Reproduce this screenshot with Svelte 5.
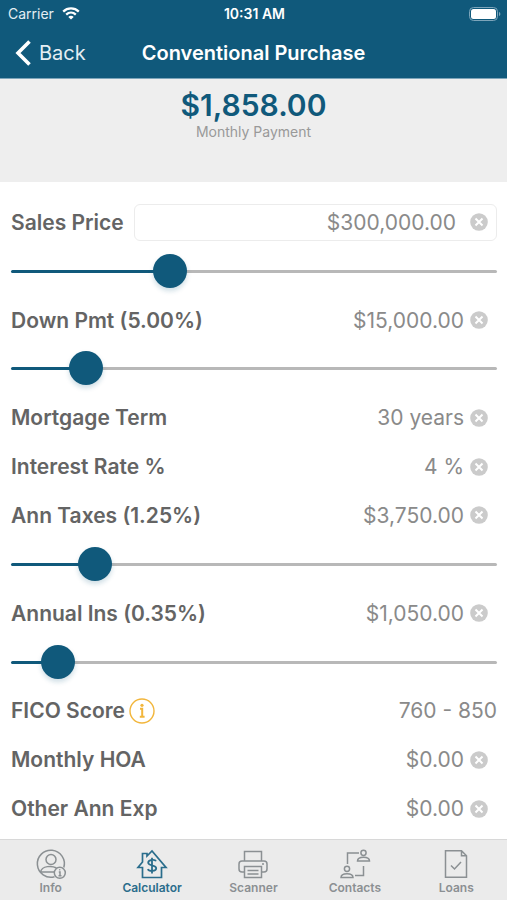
<script lang="ts">
	interface Field {
		id: string;
		label: string;
		value: string;
		slider?: number;
		boxed?: boolean;
	}

	let fields: Field[] = $state([
		{ id: 'price', label: 'Sales Price', value: '$300,000.00', slider: 314, boxed: true },
		{ id: 'down', label: 'Down Pmt (5.00%)', value: '$15,000.00', slider: 128 },
		{ id: 'term', label: 'Mortgage Term', value: '30 years' },
		{ id: 'rate', label: 'Interest Rate %', value: '4 %' },
		{ id: 'taxes', label: 'Ann Taxes (1.25%)', value: '$3,750.00', slider: 149 },
		{ id: 'insurance', label: 'Annual Ins (0.35%)', value: '$1,050.00', slider: 66 },
		{ id: 'fico', label: 'FICO Score', value: '760 - 850' },
		{ id: 'hoa', label: 'Monthly HOA', value: '$0.00' },
		{ id: 'other', label: 'Other Ann Exp', value: '$0.00' }
	]);

	const tabs = ['Info', 'Calculator', 'Scanner', 'Contacts', 'Loans'];
	let active = $state('Calculator');
</script>

<div class="app">
	<header>
		<div class="status">
			<div class="carrier">
				<span>Carrier</span>
				<svg class="wifi" viewBox="0 0 18 13" fill="none" stroke="currentColor" stroke-width="2.3">
					<path d="M1.2 4.6C5.6 0.4 12.4 0.4 16.8 4.6" />
					<path d="M4.2 7.6C7 5 11 5 13.8 7.6" />
					<path d="M9 12.6L6.3 9.9C7.8 8.5 10.2 8.5 11.7 9.9Z" fill="currentColor" stroke="none" />
				</svg>
			</div>
			<span class="time">10:31 AM</span>
			<svg class="battery" viewBox="0 0 32 14">
				<rect x="0.5" y="0.5" width="28" height="13" rx="4" fill="none" stroke="#7da5ba" />
				<rect x="2" y="2" width="25" height="10" rx="2.5" fill="#fff" />
				<path d="M30 5C31.8 5.5 31.8 8.5 30 9Z" fill="#7da5ba" />
			</svg>
		</div>
		<nav class="navbar">
			<button class="back">
				<svg viewBox="0 0 16 26" fill="none" stroke="currentColor" stroke-width="3.6">
					<path d="M14.5 1.5L3 13L14.5 24.5" />
				</svg>
				Back
			</button>
			<h1>Conventional Purchase</h1>
		</nav>
	</header>

	<section class="summary">
		<strong>$1,858.00</strong>
		<span>Monthly Payment</span>
	</section>

	<main>
		{#each fields as field (field.id)}
			<div class="row">
				<label for={field.id}>{field.label}</label>
				{#if field.id === 'fico'}
					<button class="info" aria-label="About FICO score">
						<svg viewBox="0 0 26 26" fill="none" stroke="#f2b63c">
							<circle cx="13" cy="13" r="12" stroke-width="1.4" />
							<path d="M11 10.800H13.200V18.500M10.800 18.700H15.600" stroke-width="2" />
							<circle cx="13" cy="7.300" r="1.600" fill="#f2b63c" stroke="none" />
						</svg>
					</button>
					<select id={field.id} bind:value={field.value}>
						<option>760 - 850</option>
					</select>
				{:else}
					<div class="entry" class:boxed={field.boxed}>
						<input id={field.id} type="text" bind:value={field.value} />
						<button class="clear" aria-label={`Clear ${field.label}`} onclick={() => (field.value = '')}>
							<svg viewBox="0 0 18 18">
								<circle cx="9" cy="9" r="8.8" fill="#cbcbcb" />
								<path d="M5.5 5.5L12.5 12.5M12.5 5.5L5.5 12.5" stroke="#fff" stroke-width="2" />
							</svg>
						</button>
					</div>
				{/if}
			</div>
			{#if field.slider !== undefined}
				<div class="row">
					<input
						class="slider"
						type="range"
						min="0"
						max="1000"
						aria-label={field.label}
						style={`--fill: ${field.slider / 10}%`}
						bind:value={field.slider}
					/>
				</div>
			{/if}
		{/each}
	</main>

	<nav class="tabs">
		{#each tabs as tab}
			<button class:active={tab === active} onclick={() => (active = tab)}>
				<svg viewBox="0 0 32 32" fill="none" stroke="currentColor" stroke-width="1.5">
					{#if tab === 'Info'}
						<path d="M19.5 28.7A13.5 13.5 0 1 1 28.8 19.5" />
						<circle cx="16" cy="11.5" r="5" />
						<path d="M5.500 24C7 17.500 17 17.500 21.500 20M5.500 24H19" />
						<circle cx="24.8" cy="24.8" r="5.5" />
						<path d="M23.8 24H25V27.5M23.5 27.7H26.5M24.2 21.8H25.3" />
					{:else if tab === 'Calculator'}
						<path d="M6.5 19.5V29.5H25.5V19.5H30L16 3L11 8V5.5H6.500V14L2 19.5Z" stroke-width="1.7" />
						<path d="M20 13.3C19.3 11.300 12.200 11.300 12.200 14.800C12.200 18.300 20.200 16.300 20.200 20.300C20.200 23.800 12.800 23.500 11.800 21.200M16 9.800V25.500" stroke-width="1.8" />
					{:else if tab === 'Scanner'}
						<path d="M7.5 13V3.5H24.5V13M7.5 24H5C3 24 2 23 2 21V16C2 14 3 13 5 13H27C29 13 30 14 30 16V21C30 23 29 24 27 24H24.5" />
						<path d="M7.5 18.5H24.5V29.5H7.500ZM10.5 22.5H21.5M10.5 26H21.5M25 16H27" />
					{:else if tab === 'Contacts'}
						<path d="M8.5 16V5H20M24.5 18V27.5H16" />
						<circle cx="24.5" cy="4.8" r="2.6" />
						<path d="M18.5 13C18.5 8 30.5 8 30.5 13Z" />
						<circle cx="8" cy="20.8" r="2.6" />
						<path d="M2 29.5C2 24.5 14 24.5 14 29.5Z" />
					{:else}
						<path d="M5.5 2.7H21.5L26.5 7.7V29.3H5.500ZM21.5 2.7V7.7H26.5" />
						<path d="M11 17.5L14.5 21L21 14" />
					{/if}
				</svg>
				<span>{tab}</span>
			</button>
		{/each}
	</nav>
</div>

<style>
	:global(body) {
		margin: 0;
		background: #fff;
	}

	.app {
		display: flex;
		flex-direction: column;
		min-height: 100vh;
		font-family: Inter, "Liberation Sans", sans-serif;
		color: #646464;
	}

	button, input, select {
		font: inherit;
		color: inherit;
		background: none;
		border: none;
		margin: 0;
		padding: 0;
	}

	button {
		cursor: pointer;
	}

	svg {
		display: block;
	}

	header {
		background: #10597b;
		color: #fff;
		border-bottom: 1px solid #7da5ba;
	}

	.status {
		display: grid;
		grid-template-columns: 1fr auto 1fr;
		align-items: center;
		height: 27px;
		padding: 0 6px 0 8px;
		font-size: 14px;
	}

	.carrier {
		display: flex;
		align-items: center;
		gap: 8px;
		color: #e4eef3;
	}

	.wifi {
		width: 18px;
		height: 13px;
		color: #fff;
	}

	.time {
		font-weight: 600;
	}

	.battery {
		width: 32px;
		height: 14px;
		justify-self: end;
	}

	.navbar {
		display: grid;
		grid-template-columns: 1fr auto 1fr;
		align-items: center;
		height: 51px;
		padding: 0 15px;
	}

	.back {
		display: flex;
		align-items: center;
		gap: 8px;
		font-size: 20px;
		color: #e4eef3;
	}

	.back svg {
		width: 16px;
		height: 26px;
		color: #fff;
	}

	h1 {
		margin: 0;
		font-size: 20px;
		font-weight: 600;
	}

	.summary {
		display: flex;
		flex-direction: column;
		align-items: center;
		padding: 8px 0 41px;
		background: #eee;
	}

	.summary strong {
		font-size: 30px;
		font-weight: 600;
		line-height: 36px;
		color: #10597b;
	}

	.summary span {
		font-size: 14px;
		line-height: 18px;
		color: #999;
	}

	main {
		flex: 1;
		display: grid;
		grid-template-columns: minmax(0, 1fr);
		grid-auto-rows: minmax(44px, 1fr);
		padding: 16px 10px 6px 11px;
		font-size: 21px;
	}

	.row {
		display: flex;
		align-items: center;
	}

	label {
		font-weight: 600;
		white-space: nowrap;
	}

	.entry {
		flex: 1;
		display: flex;
		align-items: center;
		gap: 6px;
		min-width: 0;
		padding-right: 9px;
	}

	.entry input {
		flex: 1;
		min-width: 0;
		text-align: right;
		color: #8a8a8a;
	}

	.boxed {
		gap: 14px;
		height: 35px;
		margin-left: 10px;
		padding-right: 8px;
		border: 1px solid #ececec;
		border-radius: 6px;
	}

	.clear svg {
		width: 18px;
		height: 18px;
	}

	.info {
		margin-left: 4px;
	}

	.info svg {
		width: 26px;
		height: 26px;
	}

	select {
		flex: 1;
		appearance: none;
		text-align-last: right;
		color: #8a8a8a;
	}

	.slider {
		appearance: none;
		width: 100%;
		height: 34px;
	}

	.slider::-webkit-slider-runnable-track {
		height: 3px;
		border-radius: 2px;
		background: linear-gradient(to right, #10597b var(--fill), #b8b8b8 var(--fill));
	}

	.slider::-webkit-slider-thumb {
		appearance: none;
		width: 34px;
		height: 34px;
		margin-top: -16px;
		border-radius: 50%;
		background: #10597b;
		box-shadow: 0 3px 5px rgba(16, 89, 123, 0.2);
	}

	.tabs {
		display: grid;
		grid-template-columns: repeat(5, 1fr);
		height: 60px;
		background: #ebebeb;
		border-top: 1px solid #d8d8d8;
	}

	.tabs button {
		display: flex;
		flex-direction: column;
		align-items: center;
		padding-top: 8px;
		font-size: 12px;
		font-weight: 600;
		line-height: 16px;
		color: #8b9093;
	}

	.tabs svg {
		width: 32px;
		height: 32px;
	}

	.tabs .active {
		color: #2a6d8c;
	}
</style>
